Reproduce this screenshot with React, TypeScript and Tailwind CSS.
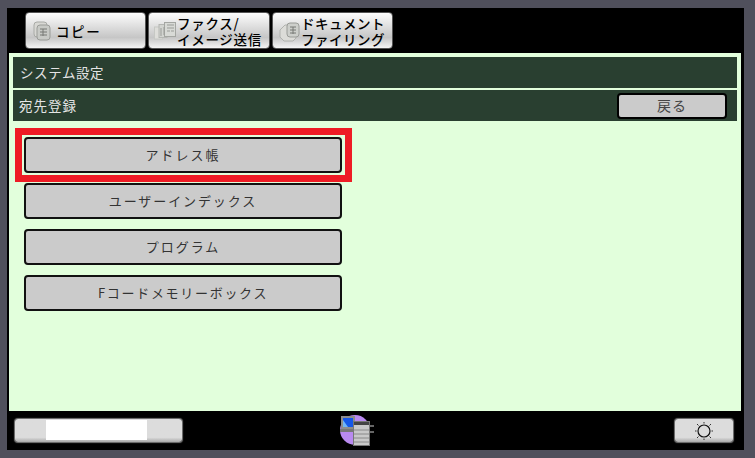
const jp = "font-['Noto_Sans_CJK_JP','Noto_Sans',sans-serif]";

const CopyIcon = () => (
  <svg width="20" height="20" viewBox="0 0 20 20" className="shrink-0 mr-[3px]">
    <rect x="1" y="1" width="13" height="15" rx="3" fill="#d8d8d4" stroke="#a8aaa6" />
    <rect x="4" y="4" width="13" height="15" rx="3" fill="#c8cac6" stroke="#9a9c98" />
    <path d="M7 8h7M7 11h7M7 14h7M10 8v7" stroke="#777975" fill="none" />
  </svg>
);

const FaxIcon = () => (
  <svg width="23" height="20" viewBox="0 0 23 20" className="shrink-0">
    <rect x="0.500" y="6" width="8" height="12" fill="#dededa" stroke="#c6c8c4" />
    <rect x="5" y="3.500" width="8" height="13" fill="#d2d4d0" stroke="#b4b6b2" />
    <rect x="10.500" y="1.500" width="11" height="14" fill="#d8dad6" stroke="#a4a6a2" />
    <path d="M7 7v8M10 6v8M13 4h7M13 7h7M13 10h3M17 10h3" stroke="#9a9c98" fill="none" />
  </svg>
);

const DocIcon = () => (
  <svg width="22" height="22" viewBox="0 0 22 22" className="shrink-0">
    <path d="M6 5 1 10v7l4 4h9l3-3V5z" fill="#dcdcd8" stroke="#b0b2ae" />
    <rect x="8" y="3" width="12" height="14" rx="3" fill="#cdcfcb" stroke="#9a9c98" />
    <path d="M11 7h6M11 10h6M11 13h6M14 7v7" stroke="#777975" fill="none" />
  </svg>
);

const Tab = ({ width, pad, icon, lines, textClass }: { width: string; pad: string; icon: React.ReactNode; lines: string[]; textClass: string }) => (
  <div
    className={`${width} ${pad} h-[37px] rounded-[4px] border border-[#555] bg-gradient-to-b from-[#fdfdfd] via-[#c6c6c6] via-70% to-[#f4f4f4] flex items-center text-black`}
  >
    {icon}
    <div className={`${textClass} text-[13.5px] leading-[16px] whitespace-nowrap font-medium`}>
      {lines.map((l) => (
        <div key={l}>{l}</div>
      ))}
    </div>
  </div>
);

const MenuButton = ({ label, tracking, children }: { label: string; tracking: string; children?: React.ReactNode }) => (
  <div className={`${tracking} relative w-[318px] h-[36px] rounded-[4px] border-2 border-[#111] bg-[#cbcbcb] flex items-center justify-center text-[13px] text-[#333]`}>
    {label}
    {children}
  </div>
);

const PrinterIcon = () => (
  <svg width="36" height="34" viewBox="0 0 36 34" className="shrink-0 ml-[157px]">
    <circle cx="16" cy="16" r="15" fill="#b98af0" />
    <rect x="2" y="2" width="14" height="13" fill="#8d8d8d" />
    <rect x="4" y="4" width="10" height="9" fill="#1557e8" />
    <polygon points="4,6 4,13 9,13" fill="#6fb4f5" />
    <rect x="1" y="15" width="14" height="3" fill="#777" />
    <rect x="14.500" y="7.500" width="16" height="24" fill="#c9c9c9" stroke="#777" />
    <rect x="15" y="8" width="15" height="3" fill="#444" />
    <path d="M15 16h15M15 20h15M15 24h15M15 28h15" stroke="#8a8a8a" />
    <path d="M31 12h4M31 18h4" stroke="#666" strokeWidth="2" />
  </svg>
);

const SunIcon = () => (
  <svg width="20" height="20" viewBox="0 0 20 20" fill="none">
    <circle cx="10" cy="10" r="6" stroke="#111" strokeWidth="1.2" />
    <path
      d="M10 1v1.500M10 17.500V19M1 10h1.500M17.500 10H19M3 3l1.500 1.500M15.500 15.500 17 17M17 3l-1.500 1.500M4.500 15.500 3 17"
      stroke="#333"
    />
  </svg>
);

const barButton = "h-[23px] rounded-[3px] bg-gradient-to-b from-[#dcdcdc] from-80% to-[#a9a9a9] shadow-[0_0_1px_1px_#777]";

export default function App() {
  return (
    <div className={`${jp} w-[755px] h-[458px] bg-[#50505c] pt-[8px] pl-[7px] pr-[11px] pb-[8px]`}>
      <div className="h-full bg-black flex flex-col">
        <div className="h-[45px] pl-[18px] pt-[4px] flex gap-[2px] shrink-0">
          <Tab width="w-[121px]" pad="pl-[7px]" icon={<CopyIcon />} lines={["コピー"]} textClass="tracking-[1.600px]" />
          <Tab width="w-[122px]" pad="pl-[5px]" icon={<FaxIcon />} lines={["ファクス/", "イメージ送信"]} textClass="tracking-[0.700px]" />
          <Tab width="w-[121px]" pad="pl-[6px]" icon={<DocIcon />} lines={["ドキュメント", "ファイリング"]} textClass="tracking-[0.500px]" />
        </div>

        <div className="ml-[2px] w-[732px] h-[358px] shrink-0 bg-[#e2ffdc] pt-[4px] pl-[4px]">
          <div className="w-[724px] flex flex-col gap-[2px]">
            <div className="h-[31px] bg-[#293f30] flex items-center pl-[7px] text-[13.5px] tracking-[0.6px] text-[#e4e4e4]">
              システム設定
            </div>
            <div className="h-[31px] bg-[#293f30] flex items-center justify-between pl-[6px] pr-[10px] text-[13.5px] tracking-[1px] text-[#e4e4e4]">
              宛先登録
              <div className="w-[110px] h-[26px] rounded-[4px] border-2 border-black bg-[#cbcbcb] flex items-center justify-center text-[14px] tracking-[1px] text-[#444]">
                戻る
              </div>
            </div>
          </div>

          <div className="mt-[16px] ml-[11px] flex flex-col gap-[10px]">
            <MenuButton label="アドレス帳" tracking="tracking-[2px]">
              <div className="absolute left-[-11px] top-[-11px] w-[337px] h-[54px] border-[7px] border-[#ee1c25]" />
            </MenuButton>
            <MenuButton label="ユーザーインデックス" tracking="tracking-[1.900px]" />
            <MenuButton label="プログラム" tracking="tracking-[2px]" />
            <MenuButton label="Fコードメモリーボックス" tracking="tracking-[1.700px]" />
          </div>
        </div>

        <div className="flex-1 flex items-center pl-[8px] pr-[11px]">
          <div className={`${barButton} w-[167px] pl-[31px]`}>
            <div className="w-[101px] h-[20px] mt-[1px] bg-white" />
          </div>
          <PrinterIcon />
          <div className={`${barButton} ml-auto w-[58px] flex items-center justify-center`}>
            <SunIcon />
          </div>
        </div>
      </div>
    </div>
  );
}
